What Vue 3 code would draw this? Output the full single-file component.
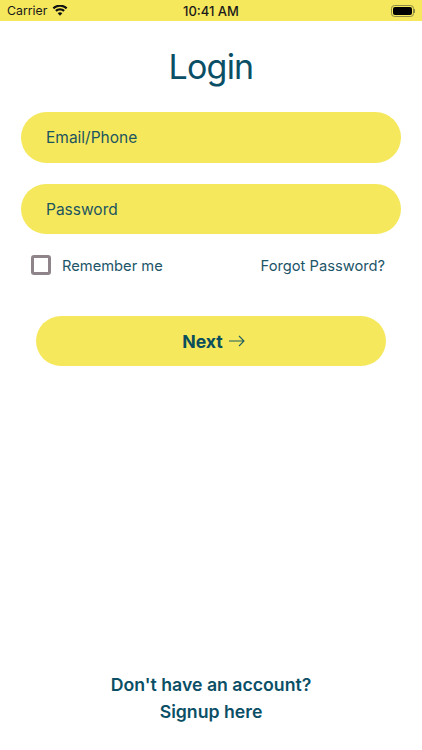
<template>
  <div class="screen">
    <div class="status">
      <div class="status-left">
        <span>Carrier</span>
        <svg width="16" height="12" viewBox="0 0 16 12" fill="#111">
          <path d="M8 1.800c2.300 0 4.400.9 5.900 2.400l1.500-1.600C13.500.7 10.900-.4 8-.4S2.500.7.600 2.600l1.500 1.600C3.600 2.700 5.700 1.800 8 1.800z" />
          <path d="M8 5.500c1.300 0 2.400.5 3.300 1.300l1.500-1.600C11.500 4 9.800 3.300 8 3.300S4.500 4 3.200 5.200l1.500 1.600C5.600 6 6.700 5.500 8 5.500z" />
          <path d="M8 7.300c-.9 0-1.700.3-2.300.9L8 10.800l2.300-2.600C9.700 7.600 8.900 7.300 8 7.300z" />
        </svg>
      </div>
      <span class="time">10:41 AM</span>
      <div class="status-right">
        <div class="battery"><div class="battery-fill"></div></div>
        <div class="battery-nub"></div>
      </div>
    </div>

    <h1>Login</h1>

    <div class="fields">
      <input class="field" type="text" placeholder="Email/Phone" />
      <input class="field" type="password" placeholder="Password" />
    </div>

    <div class="options">
      <label class="remember">
        <span class="box"></span>
        <span class="label">Remember me</span>
      </label>
      <a class="label">Forgot Password?</a>
    </div>

    <button class="next">
      <span>Next</span>
      <svg width="18" height="12" viewBox="0 0 18 12" fill="none" stroke="#1f5f62" stroke-width="1.1">
        <path d="M1 6h15M11 1l5 5-5 5" />
      </svg>
    </button>

    <div class="footer">
      <div>Don't have an account?</div>
      <div>Signup here</div>
    </div>
  </div>
</template>

<script setup>
</script>

<style scoped>
.screen {
  height: 750px;
  display: flex;
  flex-direction: column;
  background: #fff;
  color: #0b4f66;
  font-family: Inter, "Liberation Sans", sans-serif;
  overflow: hidden;
}
.status {
  height: 21px;
  flex-shrink: 0;
  background: #f5e85c;
  display: flex;
  align-items: center;
  padding: 0 7px;
  color: #1a1a1a;
  font-size: 12.300px;
}
.status-left {
  flex: 1;
  display: flex;
  align-items: center;
  gap: 5px;
}
.status-right {
  flex: 1;
  display: flex;
  align-items: center;
  justify-content: flex-end;
}
.time {
  font-size: 13px;
  font-weight: 500;
}
.battery {
  width: 23px;
  height: 12px;
  border: 1px solid #8d8a45;
  border-radius: 3.500px;
  padding: 1px;
  box-sizing: border-box;
}
.battery-fill {
  height: 100%;
  background: #000;
  border-radius: 2px;
}
.battery-nub {
  width: 1px;
  height: 4px;
  background: #8d8a45;
}
h1 {
  margin: 23px 0 0;
  height: 46px;
  line-height: 46px;
  font-size: 34px;
  font-weight: 400;
  letter-spacing: -0.800px;
  text-align: center;
}
.fields {
  display: flex;
  flex-direction: column;
  gap: 21px;
  margin: 22px 21px 0;
}
.field {
  box-sizing: border-box;
  height: 50.500px;
  border: none;
  outline: none;
  border-radius: 26px;
  background: #f5e85c;
  padding: 1px 25px 0;
  font-family: inherit;
  font-size: 15.500px;
  color: #0b4f5c;
}
.field::placeholder {
  color: #1c5560;
  opacity: 1;
}
.options {
  display: flex;
  align-items: center;
  justify-content: space-between;
  margin: 21px 37px 0 31px;
  font-size: 14.700px;
  color: #1c5568;
}
.label {
  padding-top: 1px;
}
.remember {
  display: flex;
  align-items: center;
  gap: 11px;
}
.box {
  width: 20px;
  height: 20px;
  box-sizing: border-box;
  border: 3px solid #8e8489;
  border-radius: 3px;
}
.next {
  margin: 41px 36px 0;
  height: 50px;
  border: none;
  border-radius: 26px;
  background: #f5e85c;
  display: flex;
  align-items: center;
  justify-content: center;
  gap: 5px;
  padding: 0 0 0 6px;
  font-family: inherit;
  font-size: 17.700px;
  font-weight: 700;
  color: #0b4f5c;
  cursor: pointer;
}
.footer {
  margin-top: auto;
  margin-bottom: 25px;
  text-align: center;
  font-size: 17.700px;
  font-weight: 600;
  line-height: 27px;
}
</style>

<style>
html,
body {
  margin: 0;
  background: #fff;
}
</style>
